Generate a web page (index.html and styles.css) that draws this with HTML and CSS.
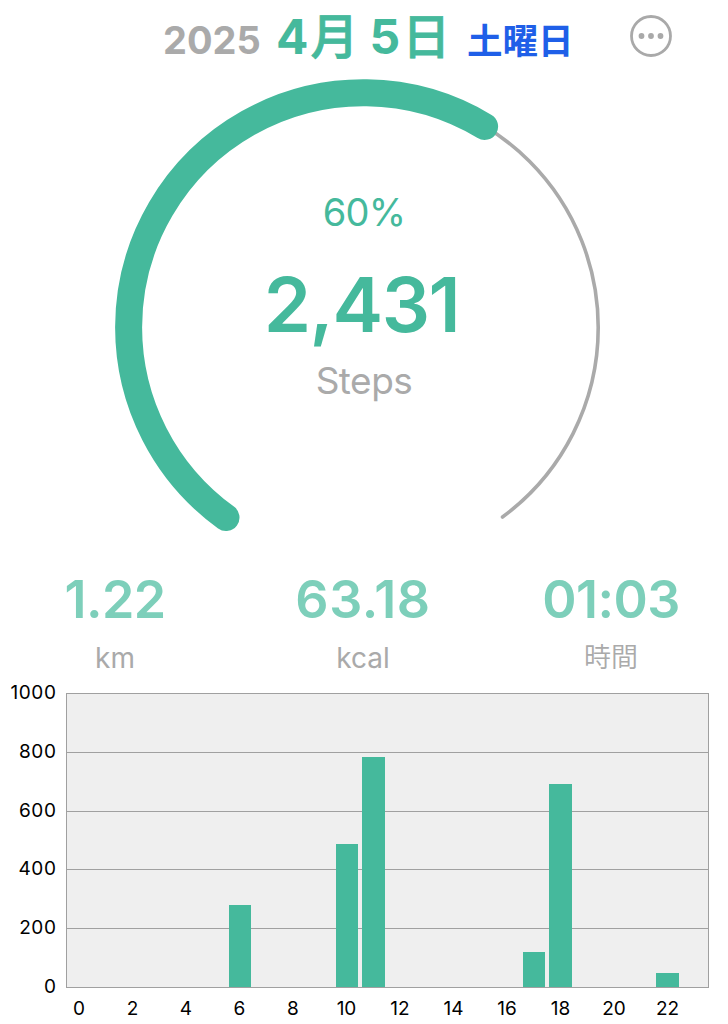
FILE: index.html
```html
<!DOCTYPE html>
<html lang="ja">
<head>
  <meta charset="UTF-8" />
  <meta name="viewport" content="width=device-width, initial-scale=1.0" />
  <title>Steps</title>
  <link rel="stylesheet" href="styles.css">
</head>
<body>
  <header class="header">
    <span class="year">2025</span>
    <span class="date"><span class="num">4</span><span class="kanji">月</span><span class="num day">5</span><span class="kanji">日</span></span>
    <span class="weekday">土曜日</span>
    <button class="menu" aria-label="メニュー">
      <svg width="42" height="42" viewBox="0 0 42 42">
        <circle cx="21" cy="21" r="19.5" fill="none" stroke="#a9a9a9" stroke-width="2.8" />
        <circle cx="11.5" cy="21" r="2.9" fill="#a9a9a9" />
        <circle cx="21" cy="21" r="2.9" fill="#a9a9a9" />
        <circle cx="30.5" cy="21" r="2.9" fill="#a9a9a9" />
      </svg>
    </button>
  </header>

  <section class="gauge">
    <svg class="ring" width="500" height="470" viewBox="114 73 500 470" fill="none" stroke-linecap="round">
      <path d="M226 517.5 A234.8 234.8 0 0 1 128.6 327.3 A234.8 234.8 0 0 1 598.2 327.3 A234.8 234.8 0 0 1 502.5 517" stroke="#aaa" stroke-width="3.6" />
      <path d="M226 517.5 A234.8 234.8 0 0 1 128.6 327.3 A234.8 234.8 0 0 1 484.6 126.5" stroke="#45b99c" stroke-width="27" />
    </svg>
    <div class="gauge-text">
      <div class="percent">60%</div>
      <div class="steps">2,431</div>
      <div class="steps-label">Steps</div>
    </div>
  </section>

  <section class="stats">
    <div class="stat">
      <div class="value">1.22</div>
      <div class="unit">km</div>
    </div>
    <div class="stat">
      <div class="value wide">63.18</div>
      <div class="unit">kcal</div>
    </div>
    <div class="stat">
      <div class="value">01:03</div>
      <div class="unit time">時間</div>
    </div>
  </section>

  <section class="chart">
    <div class="y-axis">
      <span>1000</span><span>800</span><span>600</span><span>400</span><span>200</span><span>0</span>
    </div>
    <div class="plot">
      <div class="lines"><i></i><i></i><i></i><i></i><i></i></div>
      <div class="bars">
        <b></b><b></b><b></b><b></b><b></b><b></b>
        <b style="height: 27.9%"></b><b></b><b></b><b></b>
        <b style="height: 48.7%"></b>
        <b style="height: 78.5%"></b>
        <b></b><b></b><b></b><b></b><b></b>
        <b style="height: 12%"></b>
        <b style="height: 69.2%"></b>
        <b></b><b></b><b></b>
        <b style="height: 4.8%"></b><b></b>
      </div>
    </div>
    <div class="x-axis">
      <span>0</span><span>2</span><span>4</span><span>6</span><span>8</span><span>10</span><span>12</span><span>14</span><span>16</span><span>18</span><span>20</span><span>22</span>
    </div>
  </section>
</body>
</html>
```

FILE: styles.css
```css
* {
  box-sizing: border-box;
}

body {
  margin: 0;
  width: 728px;
  height: 1024px;
  overflow: hidden;
  background: #fff;
  font-family: Inter, 'Noto Sans CJK JP', sans-serif;
  color: #aaa;
}

.header {
  display: flex;
  align-items: baseline;
  height: 73px;
  padding-left: 163px;
  line-height: 73px;
  white-space: nowrap;
}

.year {
  width: 113px;
  font-size: 38px;
  font-weight: 700;
}

.date {
  display: flex;
  width: 191px;
  color: #45b99c;
  font-size: 48px;
  font-weight: 700;
}

.kanji {
  margin-left: 2px;
  font-weight: 500;
  -webkit-text-stroke: 0.8px #45b99c;
}

.day {
  margin-left: 11px;
}

.weekday {
  width: 163px;
  color: #1f5fe8;
  font-size: 35.5px;
  font-weight: 700;
}

.menu {
  align-self: flex-start;
  margin-top: 15px;
  padding: 0;
  border: none;
  background: none;
  line-height: 0;
}

.gauge {
  display: grid;
  justify-content: center;
  height: 470px;
}

.ring,
.gauge-text {
  grid-area: 1 / 1;
}

.gauge-text {
  padding-top: 114px;
  text-align: center;
}

.percent {
  height: 50px;
  color: #45b99c;
  font-size: 38px;
  line-height: 50px;
  letter-spacing: -0.8px;
}

.steps {
  height: 132px;
  margin-left: -5px;
  color: #45b99c;
  font-size: 76px;
  font-weight: 600;
  line-height: 134px;
  letter-spacing: -1.4px;
}

.steps-label {
  font-size: 37px;
  line-height: 24px;
  letter-spacing: -0.5px;
}

.stats {
  display: grid;
  grid-template-columns: 248px 248px 248px;
  width: 744px;
  margin-left: -9px;
  padding-top: 20px;
  text-align: center;
}

.value {
  height: 72px;
  color: #7dcfba;
  font-size: 52px;
  font-weight: 600;
  line-height: 73px;
  letter-spacing: -0.6px;
}

.wide {
  letter-spacing: 0.6px;
}

.unit {
  height: 45px;
  font-size: 28px;
  line-height: 46px;
}

.time {
  font-size: 27px;
  font-weight: 350;
}

.chart {
  display: grid;
  grid-template-columns: 65.5px 643px;
  grid-template-rows: 295px 40px;
  margin-top: 13px;
  color: #000;
  font-size: 19px;
}

.y-axis {
  display: flex;
  flex-direction: column;
  justify-content: space-between;
  height: 314px;
  margin-top: -10px;
  padding-right: 9px;
  text-align: right;
  line-height: 20px;
  letter-spacing: 0.6px;
}

.plot {
  display: grid;
  background: #efefef;
  border: 1px solid #a0a0a0;
}

.lines,
.bars {
  display: grid;
  grid-area: 1 / 1;
}

.lines {
  grid-template-rows: 57.8px repeat(4, 1fr);
}

.lines i + i {
  border-top: 1px solid #a0a0a0;
}

.bars {
  grid-template-columns: repeat(24, 1fr);
  align-items: end;
}

.bars b {
  margin: 0 2px;
  background: #45b99c;
}

.x-axis {
  display: grid;
  grid-column: 2;
  grid-template-columns: repeat(12, 53.5px);
  line-height: 41px;
}

.x-axis span {
  width: 27px;
  text-align: center;
}
```
